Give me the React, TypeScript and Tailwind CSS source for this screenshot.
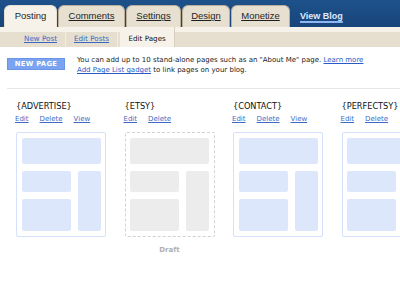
// Blogger – Edit Pages screen
const tabs = [
  { label: 'Posting', w: 'w-[53px]', active: true },
  { label: 'Comments', w: 'w-[67px]', active: false },
  { label: 'Settings', w: 'w-[55px]', active: false },
  { label: 'Design', w: 'w-[48px]', active: false },
  { label: 'Monetize', w: 'w-[59px]', active: false },
];

const pages = [
  { title: '{ADVERTISE}', links: ['Edit', 'Delete', 'View'], draft: false },
  { title: '{ETSY}', links: ['Edit', 'Delete'], draft: true },
  { title: '{CONTACT}', links: ['Edit', 'Delete', 'View'], draft: false },
  { title: '{PERFECTSY}', links: ['Edit', 'Delete'], draft: false },
];

function PageThumb({ draft }: { draft: boolean }) {
  const box = draft
    ? 'border-dashed border-[#d2d2d2]'
    : 'border-solid border-[#d5e0fa]';
  const fill = draft ? 'bg-[#ececec]' : 'bg-[#dde7fb]';
  return (
    <div
      className={`w-[90px] h-[105px] box-border border-[1.5px] rounded-[2px] px-[4.5px] pt-[4.5px] pb-[5.5px] flex flex-col gap-[7px] ${box}`}
    >
      <div className={`h-[26px] rounded-[2px] ${fill}`} />
      <div className="flex-1 flex gap-[7px]">
        <div className="w-[49px] flex flex-col gap-[7px]">
          <div className={`h-[21px] rounded-[2px] ${fill}`} />
          <div className={`flex-1 rounded-[2px] ${fill}`} />
        </div>
        <div className={`flex-1 rounded-[2px] ${fill}`} />
      </div>
    </div>
  );
}

export default function App() {
  return (
    <div
      className="w-[400px] h-[297px] overflow-hidden bg-white"
      style={{ fontFamily: '"DejaVu Sans", Verdana, sans-serif' }}
    >
      {/* top tab bar */}
      <div className="h-[27px] bg-gradient-to-b from-[#1e518b] to-[#18457a] flex items-end pl-[4px] gap-[1px]">
        {tabs.map((t) => (
          <div
            key={t.label}
            className={`${t.w} h-[22px] rounded-t-[6px] border border-b-0 flex items-center justify-center text-[9.5px] text-[#1f1f1f] ${
              t.active ? 'bg-[#f6f2ea] border-[#e8e1d3]' : 'bg-[#e7dfcf] border-[#b9ae9a] underline'
            }`}
            style={{ fontFamily: '"Liberation Sans", Arial, sans-serif' }}
          >
            {t.label}
          </div>
        ))}
        <div
          className="ml-[9px] self-center mt-[6px] text-[9px] font-bold text-[#dfe9ff] underline decoration-[#8fb6f2] decoration-[1.5px] underline-offset-[2px]"
          style={{ fontFamily: '"Liberation Sans", Arial, sans-serif' }}
        >
          View Blog
        </div>
      </div>

      {/* sub navigation */}
      <div className="bg-[#f6f2ea] pt-[5px]">
        <div className="h-[15px] bg-[#e6dece] flex pl-[16px] text-[7.2px]">
          <div className="px-[8px] flex items-center border-r border-[#f3eee4] text-[#3a67c6] underline">New Post</div>
          <div className="px-[8px] flex items-center border-r border-[#f3eee4] text-[#3a67c6] underline">Edit Posts</div>
          <div className="ml-[2px] px-[8.5px] -mt-[5px] pt-[5px] flex items-center bg-[#f6f2ea] border-r border-[#d8cfbd] text-[#111]">
            Edit Pages
          </div>
        </div>
      </div>

      {/* content */}
      <div className="pl-[7px] pt-[8px]">
        <div className="flex items-start gap-[12px]">
          <div className="mt-[3px] w-[58px] h-[12px] bg-[#7aa3f1] border border-[#6b94e6] flex items-center justify-center text-white font-bold text-[6.8px] tracking-[0.3px]">
            NEW PAGE
          </div>
          <div className="text-[7px] leading-[10px] text-[#222] whitespace-nowrap">
            You can add up to 10 stand-alone pages such as an "About Me" page.{' '}
            <span className="text-[#2a5bc4] underline">Learn more</span>
            <br />
            <span className="text-[#2a5bc4] underline">Add Page List gadget</span> to link pages on your blog.
          </div>
        </div>

        <div className="mt-[13px] h-px bg-[#e6e6e6]" />

        <div className="pl-[9px] pt-[12px] flex gap-[18.5px]">
          {pages.map((p) => (
            <div key={p.title} className="w-[90px] shrink-0 flex flex-col">
              <div className="h-[10px] leading-[10px] text-[8.2px] text-[#111] whitespace-nowrap">{p.title}</div>
              <div className="mt-[3px] h-[10px] leading-[10px] flex gap-[11px] text-[7px] text-[#3d6bc4] -ml-[1px]">
                {p.links.map((l) => (
                  <span key={l} className="underline">
                    {l}
                  </span>
                ))}
              </div>
              <div className="mt-[8px]">
                <PageThumb draft={p.draft} />
              </div>
              {p.draft && (
                <div className="mt-[8px] text-center text-[7px] font-bold text-[#b0b0b0]">Draft</div>
              )}
            </div>
          ))}
        </div>
      </div>
    </div>
  );
}
